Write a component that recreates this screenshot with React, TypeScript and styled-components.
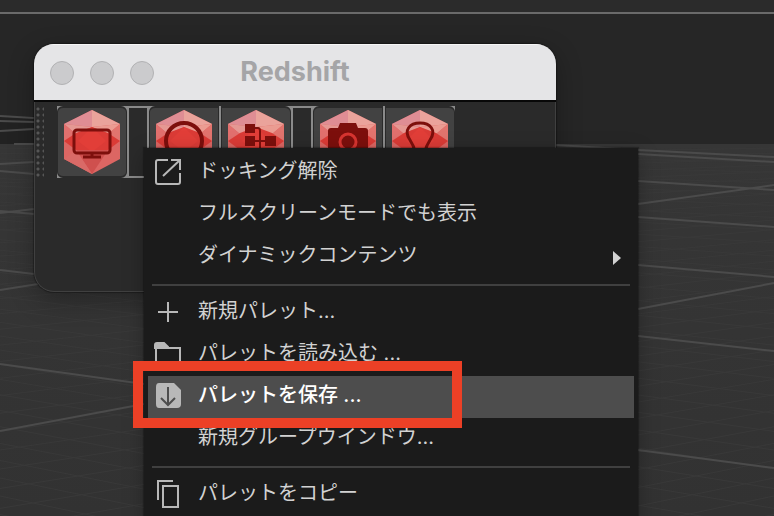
import React from 'react';
import styled, { createGlobalStyle } from 'styled-components';

const GlobalStyle = createGlobalStyle`
  * { box-sizing: border-box; }
  body {
    margin: 0;
    background: #343434;
    font-family: Inter, "Noto Sans CJK JP", sans-serif;
  }
`;

const Desktop = styled.main`
  position: relative;
  display: flex;
  flex-direction: column;
  height: 100vh;
  overflow: hidden;
`;

const TopBar = styled.header`
  height: 14px;
  background: #2b2b2b;
  border-bottom: 2px solid #6a6a6a;
`;

const Viewport = styled.section`
  flex: 1;
  min-height: 0;
  background: #262626;
`;

const Scene = styled.svg`
  display: block;
  width: 100%;
  height: 100%;
`;

const Window = styled.section`
  position: absolute;
  left: 34px;
  top: 44px;
  width: 522px;
  height: 248px;
  display: flex;
  flex-direction: column;
  border-radius: 20px;
  overflow: hidden;
  background: #2a2a2a;
  box-shadow: 0 8px 26px rgba(0, 0, 0, 0.3), 0 0 1px 1px rgba(0, 0, 0, 0.3);
`;

const TitleBar = styled.header`
  display: grid;
  grid-template-columns: 1fr auto 1fr;
  align-items: center;
  height: 58px;
  padding: 0 16px;
  background: #e5e5e7;
  border-top: 1px solid #f6f6f6;
  border-bottom: 2px solid #080808;
`;

const Lights = styled.div`
  display: flex;
  gap: 16px;
`;

const Light = styled.button`
  width: 24px;
  height: 24px;
  padding: 0;
  border: 1px solid #b1b1b3;
  border-radius: 50%;
  background: #cbcbcd;
`;

const Title = styled.h1`
  margin: 0;
  padding-bottom: 2px;
  font: 700 27px/32px Inter, sans-serif;
  color: #a5a5a7;
`;

const WindowBody = styled.div`
  flex: 1;
  display: flex;
  align-items: flex-start;
  gap: 13px;
  padding: 4px 1px;
  border: 1px solid #404040;
  border-top: 0;
  border-radius: 0 0 20px 20px;
`;

const Grip = styled.div`
  width: 8px;
  height: 72px;
  background: radial-gradient(circle at 2px 3px, #565656 1px, transparent 2px) 0 0 / 6px 6px;
`;

const Strip = styled.div`
  display: flex;
  gap: 2px;
  height: 72px;
  background: #8a8a8a;
`;

const Tool = styled.button<{ $first: boolean; $last: boolean }>`
  display: grid;
  place-items: center;
  width: 70px;
  padding: 0;
  border: 1px solid #2a2a2a;
  border-width: 2px 1px;
  border-radius: ${(p) =>
    `${p.$first ? 6 : 0}px ${p.$last ? 6 : 0}px ${p.$last ? 6 : 0}px ${p.$first ? 6 : 0}px`};
  background: #424242;
`;

const Spacer = styled.span`
  width: 18px;
  margin: 2px 0;
  background: #2a2a2a;
`;

const Menu = styled.ul`
  position: absolute;
  left: 144px;
  top: 148px;
  width: 494px;
  margin: 0;
  padding: 4px;
  list-style: none;
  background: #1b1b1b;
  box-shadow: 0 6px 20px rgba(0, 0, 0, 0.28), 0 0 1px 1px rgba(0, 0, 0, 0.25);
`;

const Entry = styled.li`
  position: relative;
`;

const MenuButton = styled.button<{ $active?: boolean }>`
  display: grid;
  grid-template-columns: 28px 1fr 24px;
  align-items: center;
  column-gap: 16px;
  width: 100%;
  height: 42px;
  padding: 0 6px 2px;
  border: 0;
  background: ${(p) => (p.$active ? '#4d4d4d' : 'transparent')};
  color: ${(p) => (p.$active ? '#ffffff' : '#d2d2d2')};
  font: ${(p) => (p.$active ? 500 : 400)} 20px/36px Inter, "Noto Sans CJK JP", sans-serif;
  text-align: left;
  white-space: nowrap;
`;

const Label = styled.span`
  grid-column: 2;
  padding-bottom: 2px;
`;

const Divider = styled.li`
  height: 2px;
  margin: 6px 4px;
  background: #404040;
`;

const Highlight = styled.span`
  position: absolute;
  z-index: 1;
  left: -15px;
  top: -15px;
  width: 329px;
  height: 67px;
  border: 10px solid #ec4026;
  pointer-events: none;
`;

const Glyph = styled.svg`
  display: block;
  width: 28px;
  height: 28px;
  fill: none;
  stroke: #b8b8b8;
  stroke-width: 2;
`;

type IconName = 'undock' | 'plus' | 'folder' | 'save' | 'copy';

const icons: Record<IconName, React.ReactNode> = {
  undock: <path d="M14 2H4Q2 2 2 4V24Q2 26 4 26H24Q26 26 26 24V15M17 2H26V12M26 2L9 18" />,
  plus: <path d="M14 4V24M4 14H24" />,
  folder: (
    <>
      <path d="M2 26V8H26V26Z" />
      <path d="M1 8V5Q1 3 3 3H10L14 7V8Z" fill="#b8b8b8" />
    </>
  ),
  save: (
    <>
      <path d="M5 1H20L27 8V22Q27 26 23 26H5Q2 26 2 22V5Q2 1 5 1Z" fill="#b8b8b8" stroke="none" />
      <path d="M14 5V22M7 16L14 23L21 16" stroke="#4d4d4d" />
    </>
  ),
  copy: <path d="M4 20V1H19M9 6H24V27H9Z" />,
};

type SymbolName = 'display' | 'sphere' | 'nodes' | 'camera' | 'light';

const symbols: Record<SymbolName, React.ReactNode> = {
  display: (
    <>
      <rect x="10" y="20" width="36" height="23" rx="3" />
      <path d="M28 44V47M19 47H37" />
    </>
  ),
  sphere: <circle cx="28" cy="31" r="18" strokeWidth="4" />,
  nodes: (
    <>
      <path d="M17 14H27V23H17ZM17 26H27V36H17ZM37 26H48V36H37Z" fill="#7d0f0c" stroke="none" />
      <path d="M27 18H30Q32 18 32 21V46M27 31H37" strokeWidth="2" />
    </>
  ),
  camera: (
    <g stroke="none">
      <path d="M8 21Q8 18 11 18H18L20 13H36L38 18H45Q48 18 48 21V46H8Z" fill="#7d0f0c" />
      <circle cx="28" cy="32" r="8" stroke="#d73430" strokeWidth="3" />
    </g>
  ),
  light: <path d="M23 42Q22 36 18 30C11 20 18 13 28 13S45 20 38 30Q34 36 33 42Z" />,
};

function Gem({ symbol }: { symbol: SymbolName }) {
  return (
    <svg width="56" height="64" viewBox="0 0 56 64" fill="none" aria-hidden="true">
      <path d="M28 0L56 14V49L28 64L0 49V14Z" fill="#dc6663" />
      <path d="M28 0V17L0 14Z" fill="#df8d94" />
      <path d="M28 0L56 14L28 17Z" fill="#eaa39b" />
      <path d="M0 14L28 17L12 24Z" fill="#e59893" />
      <path d="M56 14L28 17L44 24Z" fill="#eb9c92" />
      <path d="M0 14L12 24L0 31Z" fill="#e2706e" />
      <path d="M56 14L44 24L56 31Z" fill="#e2746e" />
      <path d="M0 31L12 23L28 17L44 23L56 31L44 40H12Z" fill="#db3b36" />
      <path d="M28 17L42 31L28 42L14 31Z" fill="#e23e38" />
      <path d="M12 40H44L28 64Z" fill="#cf504e" />
      <path d="M0 49L12 40L28 64Z" fill="#d96a67" />
      <g stroke="#7d0f0c" strokeWidth="3">{symbols[symbol]}</g>
    </svg>
  );
}

const tools: ({ name: string; symbol: SymbolName } | null)[] = [
  { name: 'RenderView', symbol: 'display' },
  null,
  { name: 'Material', symbol: 'sphere' },
  { name: 'Shader Graph', symbol: 'nodes' },
  null,
  { name: 'Camera', symbol: 'camera' },
  { name: 'Light', symbol: 'light' },
];

type Item = { label: string; icon?: IconName; active?: boolean; submenu?: boolean };

const groups: Item[][] = [
  [
    { label: 'ドッキング解除', icon: 'undock' },
    { label: 'フルスクリーンモードでも表示' },
    { label: 'ダイナミックコンテンツ', submenu: true },
  ],
  [
    { label: '新規パレット...', icon: 'plus' },
    { label: 'パレットを読み込む ...', icon: 'folder' },
    { label: 'パレットを保存 ...', icon: 'save', active: true },
    { label: '新規グループウインドウ...' },
  ],
  [{ label: 'パレットをコピー', icon: 'copy' }],
];

const majorLines =
  'M0 116L34 118M0 121L34 122M0 131L34 129M14 144H34M0 164L34 162M0 171L34 174M0 211L34 214M0 213L34 209' +
  'M0 270L34 274M0 290L38 284M0 364L144 384M0 431L144 404' +
  'M556 145L638 150L774 157M638 154L774 162M638 181L774 190M638 204L774 185M638 217L774 227' +
  'M638 265L774 277M638 309L774 283M638 336L774 351M638 450L774 468';

const minorLines = Array.from({ length: 34 }, (_, i) => {
  const y = 148 + i * 5 + i * i * 0.22;
  const drop = 14 + i * 5;
  return `M0 ${y}L774 ${y + drop}M0 ${y + drop}L774 ${y}`;
}).join('');

function GridScene() {
  return (
    <Scene viewBox="0 14 774 502" preserveAspectRatio="xMinYMin slice" fill="none" aria-hidden="true">
      <defs>
        <linearGradient id="floor" x1="0" y1="0" x2="0" y2="1">
          <stop offset="0" stopColor="#363636" />
          <stop offset="1" stopColor="#323232" />
        </linearGradient>
      </defs>
      <path d="M0 116H34V144H0Z" fill="#222222" />
      <path d="M0 144H774V516H0Z" fill="url(#floor)" />
      <path d={minorLines} stroke="#393939" />
      <path d={majorLines} stroke="#4b4b4b" strokeWidth="2" />
    </Scene>
  );
}

export default function App() {
  return (
    <Desktop>
      <GlobalStyle />
      <TopBar />
      <Viewport>
        <GridScene />
      </Viewport>
      <Window>
        <TitleBar>
          <Lights>
            <Light aria-label="Close" />
            <Light aria-label="Minimize" />
            <Light aria-label="Zoom" />
          </Lights>
          <Title>Redshift</Title>
        </TitleBar>
        <WindowBody>
          <Grip />
          <Strip>
            {tools.map((tool, i) =>
              tool ? (
                <Tool
                  key={i}
                  aria-label={tool.name}
                  $first={!tools[i - 1]}
                  $last={!tools[i + 1]}
                >
                  <Gem symbol={tool.symbol} />
                </Tool>
              ) : (
                <Spacer key={i} />
              ),
            )}
          </Strip>
        </WindowBody>
      </Window>
      <Menu>
        {groups.map((group, g) => (
          <React.Fragment key={g}>
            {g > 0 && <Divider role="separator" />}
            {group.map((item) => (
              <Entry key={item.label}>
                <MenuButton $active={item.active}>
                  {item.icon && (
                    <Glyph viewBox="0 0 28 28" aria-hidden="true">
                      {icons[item.icon]}
                    </Glyph>
                  )}
                  <Label>{item.label}</Label>
                  {item.submenu && (
                    <Glyph viewBox="0 0 28 28" aria-hidden="true">
                      <path d="M9 9L17 16L9 23Z" fill="#d2d2d2" stroke="none" />
                    </Glyph>
                  )}
                </MenuButton>
                {item.active && <Highlight />}
              </Entry>
            ))}
          </React.Fragment>
        ))}
      </Menu>
    </Desktop>
  );
}
